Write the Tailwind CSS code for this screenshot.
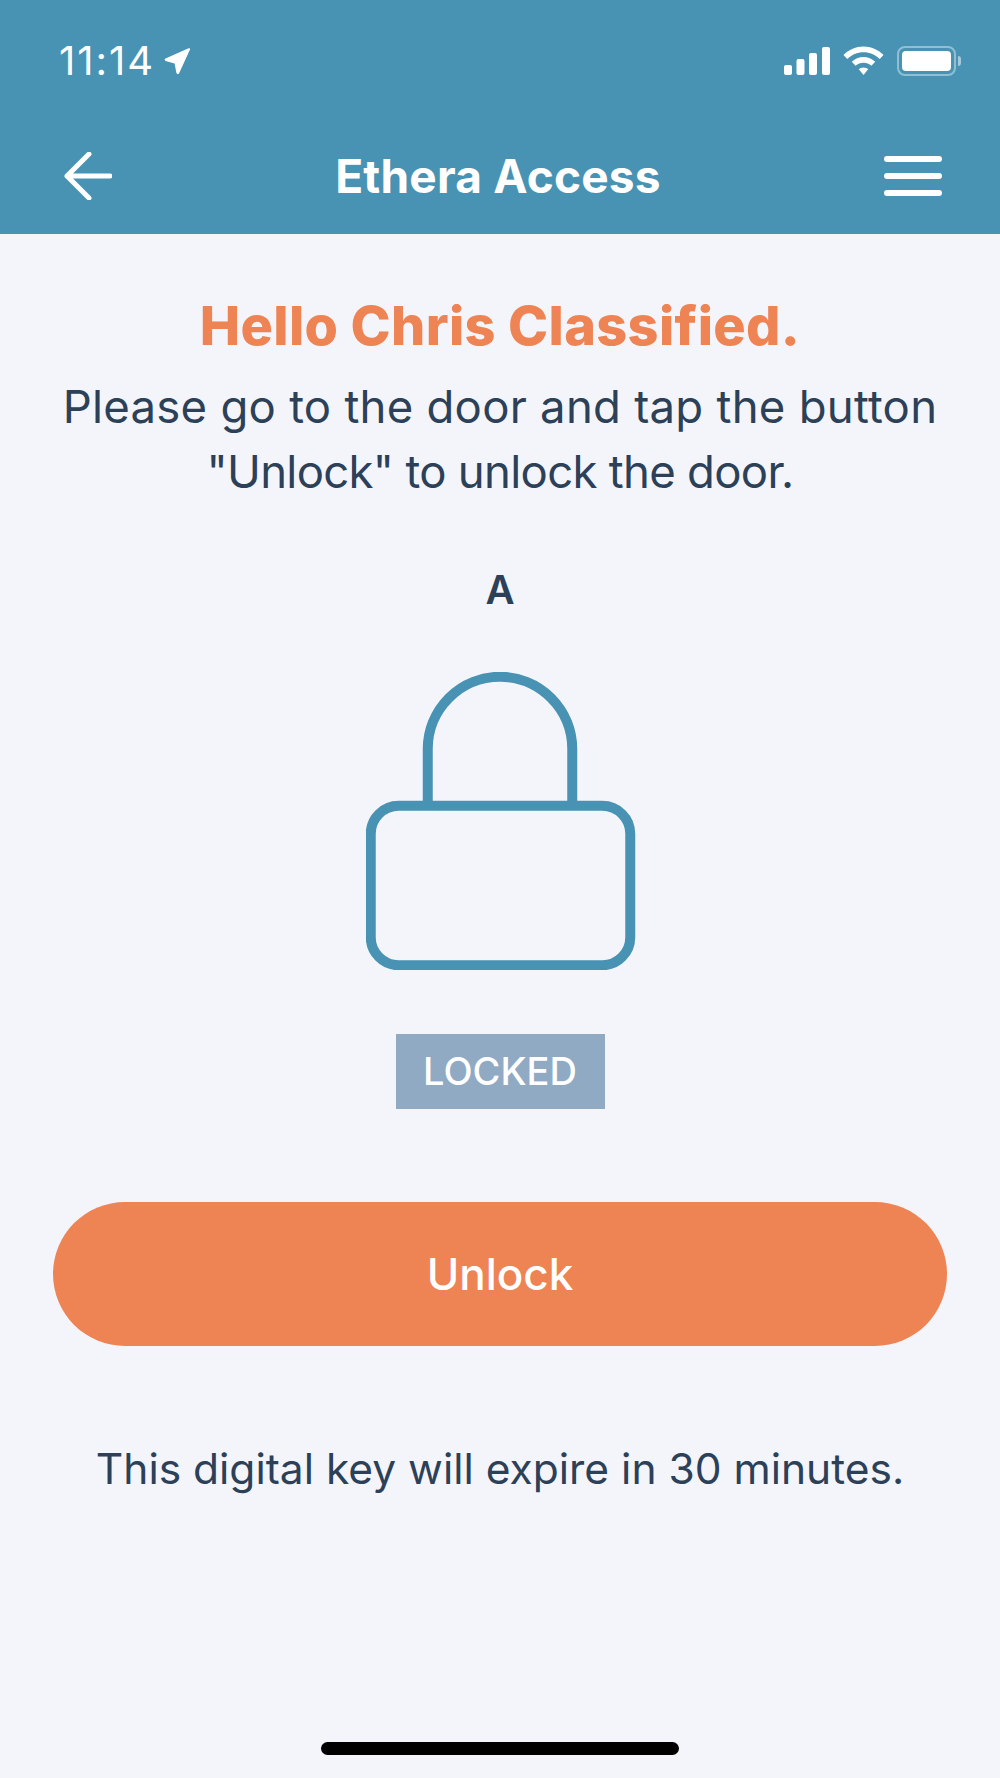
<!DOCTYPE html>
<html lang="en">
<head>
    <meta charset="UTF-8">
    <meta name="viewport" content="width=device-width, initial-scale=1.0">
    <title>Ethera Access</title>
    <script src="https://cdn.jsdelivr.net/npm/@tailwindcss/browser@4"></script>
</head>
<body class="bg-[#f4f5fb] font-['Inter',sans-serif] text-[#2c4158]">
    <div class="w-[1000px] h-[1778px] flex flex-col overflow-hidden">
        <!-- Header -->
        <header class="bg-[#4893b4] h-[234px] shrink-0 text-white">
            <!-- Status bar -->
            <div class="h-[125px] pl-[59px] pr-[39px] pt-[39px] flex justify-between items-start">
                <div class="flex items-center gap-[9px] h-[44px]">
                    <span class="text-[40px] leading-[44px] font-normal tracking-[2px]">11:14</span>
                    <svg width="27" height="27" viewBox="0 0 27 27" fill="#fff"><path d="M26 1.5 L15 25.5 Q13.5 27 12.4 25 L10.6 15.4 L1.5 13 Q-0.2 11.8 1.5 10.6 L24 0.6 Q26.5 -0.4 26 1.5 Z"/></svg>
                </div>
                <div class="flex items-center gap-[13px] h-[44px]">
                    <svg width="46" height="30" viewBox="0 0 46 30" fill="#fff">
                        <rect x="0" y="19" width="8" height="10" rx="2"/>
                        <rect x="12.500" y="13" width="8" height="16" rx="2"/>
                        <rect x="25" y="7" width="8" height="22" rx="2"/>
                        <rect x="38" y="1" width="8" height="28" rx="2"/>
                    </svg>
                    <svg width="41" height="30" viewBox="0 0 41 30" fill="#fff">
                        <path d="M20.500 0.500 C28 0.500 35 3.500 40.500 9 L36.700 13 C32.500 8.800 26.700 6.300 20.500 6.300 C14.300 6.300 8.500 8.800 4.300 13 L0.500 9 C6 3.500 13 0.500 20.500 0.500 Z"/>
                        <path d="M20.500 11 C25 11 29 12.800 32.200 15.800 L28.400 19.700 C26.300 17.800 23.500 16.700 20.500 16.700 C17.500 16.700 14.700 17.800 12.600 19.700 L8.800 15.800 C12 12.800 16 11 20.500 11 Z"/>
                        <path d="M20.500 21.500 C22.300 21.500 24 22.200 25.200 23.300 L20.500 29 L15.800 23.300 C17 22.200 18.700 21.500 20.500 21.500 Z"/>
                    </svg>
                    <div class="flex items-center gap-[2px]">
                        <div class="w-[59px] h-[30px] border-[2px] border-white/40 rounded-[8px] p-[3px]">
                            <div class="w-full h-full bg-white rounded-[4px]"></div>
                        </div>
                        <div class="w-[3px] h-[10px] bg-white/50 rounded-r-full"></div>
                    </div>
                </div>
            </div>
            <!-- Nav row -->
            <div class="flex items-center justify-between h-[102px] pl-[64px] pr-[58px]">
                <svg width="48" height="48" viewBox="0 0 48 48" fill="none" stroke="#fff" stroke-width="5" stroke-linecap="round" stroke-linejoin="round">
                    <path d="M46 24 H3 M25 2 L3 24 L25 46"/>
                </svg>
                <h1 class="text-[46px] font-bold leading-none tracking-[0.2px]">Ethera Access</h1>
                <div class="w-[58px] flex flex-col gap-[11px]">
                    <div class="h-[6px] bg-white rounded-full"></div>
                    <div class="h-[6px] bg-white rounded-full"></div>
                    <div class="h-[6px] bg-white rounded-full"></div>
                </div>
            </div>
        </header>

        <!-- Content -->
        <main class="flex flex-col items-center flex-1 relative">
            <h2 class="mt-[62px] text-[54px] leading-[60px] font-extrabold tracking-[0.35px] text-[#ee8353]">Hello Chris Classified.</h2>
            <p class="mt-[18px] text-[45.500px] leading-[65px] text-center tracking-[0.25px]">Please go to the door and tap the button<br><span class="tracking-[-0.7px]">"Unlock" to unlock the door.</span></p>
            <div class="mt-[61px] text-[40px] leading-[50px] font-semibold">A</div>
            <svg class="mt-[57px] ml-[1px]" width="270" height="298" viewBox="0 0 270 298" fill="none" stroke="#4893b4" stroke-width="10">
                <path d="M61.750 134 V77 A72.250 72.250 0 0 1 206.250 77 V134"/>
                <rect x="4.750" y="133.750" width="259.500" height="159.500" rx="28"/>
            </svg>
            <div class="mt-[64px] w-[209px] h-[75px] bg-[#90aac4] text-white text-[38px] font-medium flex items-center justify-center">LOCKED</div>
            <button class="mt-[93px] w-[894px] h-[144px] rounded-full bg-[#ee8353] text-white text-[44px] font-medium">Unlock</button>
            <p class="mt-[98px] text-[42.500px] leading-[50px]">This digital key will expire in 30 minutes.</p>
            <div class="absolute left-[321px] top-[1508px] w-[358px] h-[13px] rounded-full bg-black"></div>
        </main>
    </div>
</body>
</html>
